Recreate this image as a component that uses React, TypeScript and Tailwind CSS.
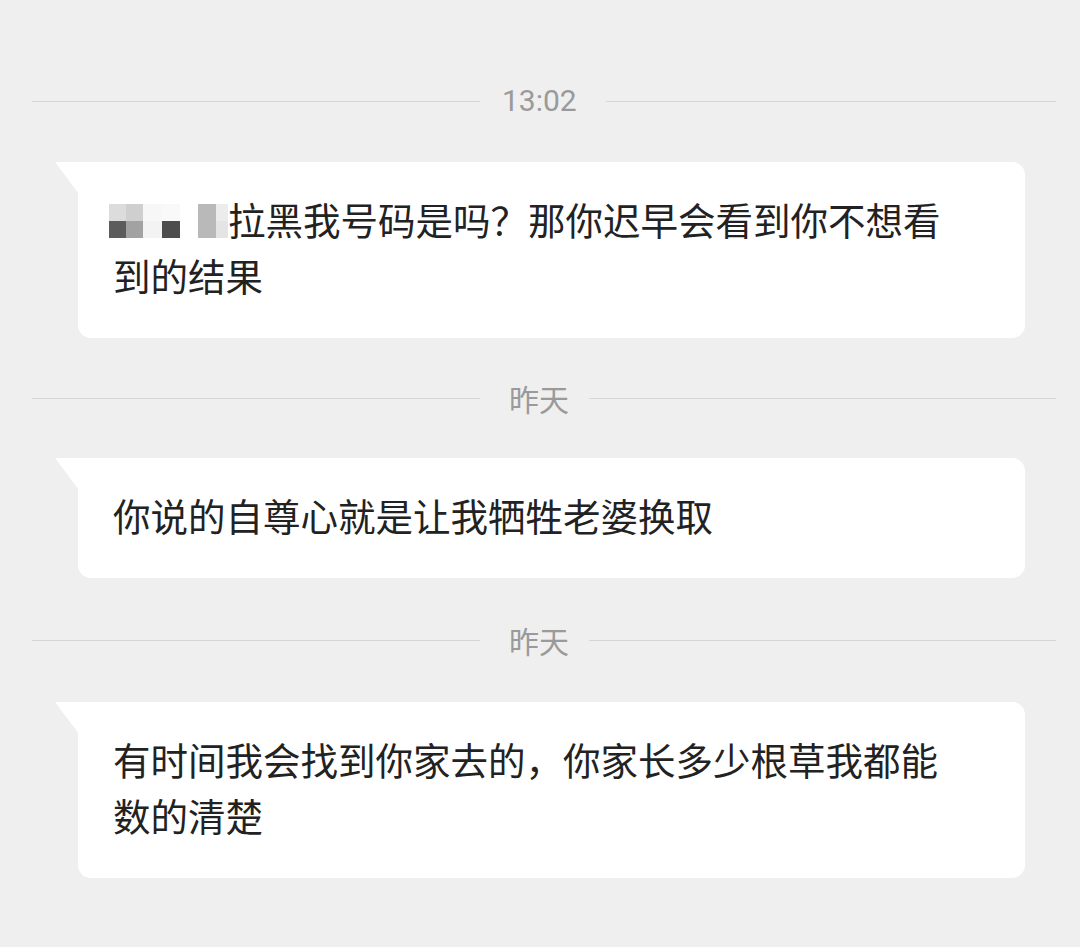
import React from "react";

const CJK = "font-['Noto_Sans_CJK_SC','Noto_Sans',sans-serif]";

// pixelated name at the start of the first message
const MOSAIC_COLS = [17, 17, 19, 18, 18, 18, 12];
const MOSAIC_TOP = ["#dcdcdc", "#cfcfcf", "#f7f7f7", "#f9f9f9", "#ffffff", "#b9b9b9", "#ececec"];
const MOSAIC_BOTTOM = ["#5c5c5c", "#a2a2a2", "#f3f3f3", "#4d4d4d", "#ffffff", "#b9b9b9", "#e4e4e4"];

function Mosaic() {
  let x = 0;
  const cells = MOSAIC_COLS.map((w, i) => {
    const cx = x;
    x += w;
    return (
      <g key={i}>
        <rect x={cx} y={0} width={w} height={17} fill={MOSAIC_TOP[i]} />
        <rect x={cx} y={17} width={w} height={17} fill={MOSAIC_BOTTOM[i]} />
      </g>
    );
  });
  return (
    <svg className="-ml-[4px] inline-block align-[-3px]" width="119" height="34" viewBox="0 0 119 34">
      {cells}
    </svg>
  );
}

function Divider({ label, labelClass }: { label: string; labelClass: string }) {
  return (
    <div className="flex h-[40px] items-center pl-[32px] pr-[24px]">
      <div className="h-px w-[448px] bg-[#d6d6d6]" />
      <div className={`shrink-0 text-[30px] leading-none text-[#9a9a9a] ${labelClass}`}>{label}</div>
      <div className="h-px flex-1 bg-[#d6d6d6]" />
    </div>
  );
}

function Bubble({ children }: { children: React.ReactNode }) {
  return (
    <div className="relative ml-[78px] w-[947px]">
      {/* tail at the top-left corner */}
      <svg className="absolute -left-[23px] top-0" width="24" height="32" viewBox="0 0 24 32">
        <polygon points="0,0 24,0 24,32" fill="#ffffff" />
      </svg>
      <div
        className={`rounded-[13px] rounded-tl-none bg-white pt-[29px] pb-[35px] pl-[35px] pr-[67px] text-[37.5px] leading-[56px] text-[#222222] ${CJK}`}
      >
        {children}
      </div>
    </div>
  );
}

export default function App() {
  return (
    <div className="min-h-[947px] w-[1080px] bg-[#efefef] pt-[81px]">
      <Divider label="13:02" labelClass="pl-[22px] pr-[29px] font-['Roboto',sans-serif]" />
      <div className="mt-[41px]">
        <Bubble>
          <Mosaic />
          拉黑我号码是吗？那你迟早会看到你不想看到的结果
        </Bubble>
      </div>
      <div className="mt-[40px]">
        <Divider label="昨天" labelClass={`pl-[29px] pr-[20px] ${CJK}`} />
      </div>
      <div className="mt-[40px]">
        <Bubble>你说的自尊心就是让我牺牲老婆换取</Bubble>
      </div>
      <div className="mt-[42px]">
        <Divider label="昨天" labelClass={`pl-[29px] pr-[20px] ${CJK}`} />
      </div>
      <div className="mt-[42px]">
        <Bubble>有时间我会找到你家去的，你家长多少根草我都能数的清楚</Bubble>
      </div>
    </div>
  );
}
